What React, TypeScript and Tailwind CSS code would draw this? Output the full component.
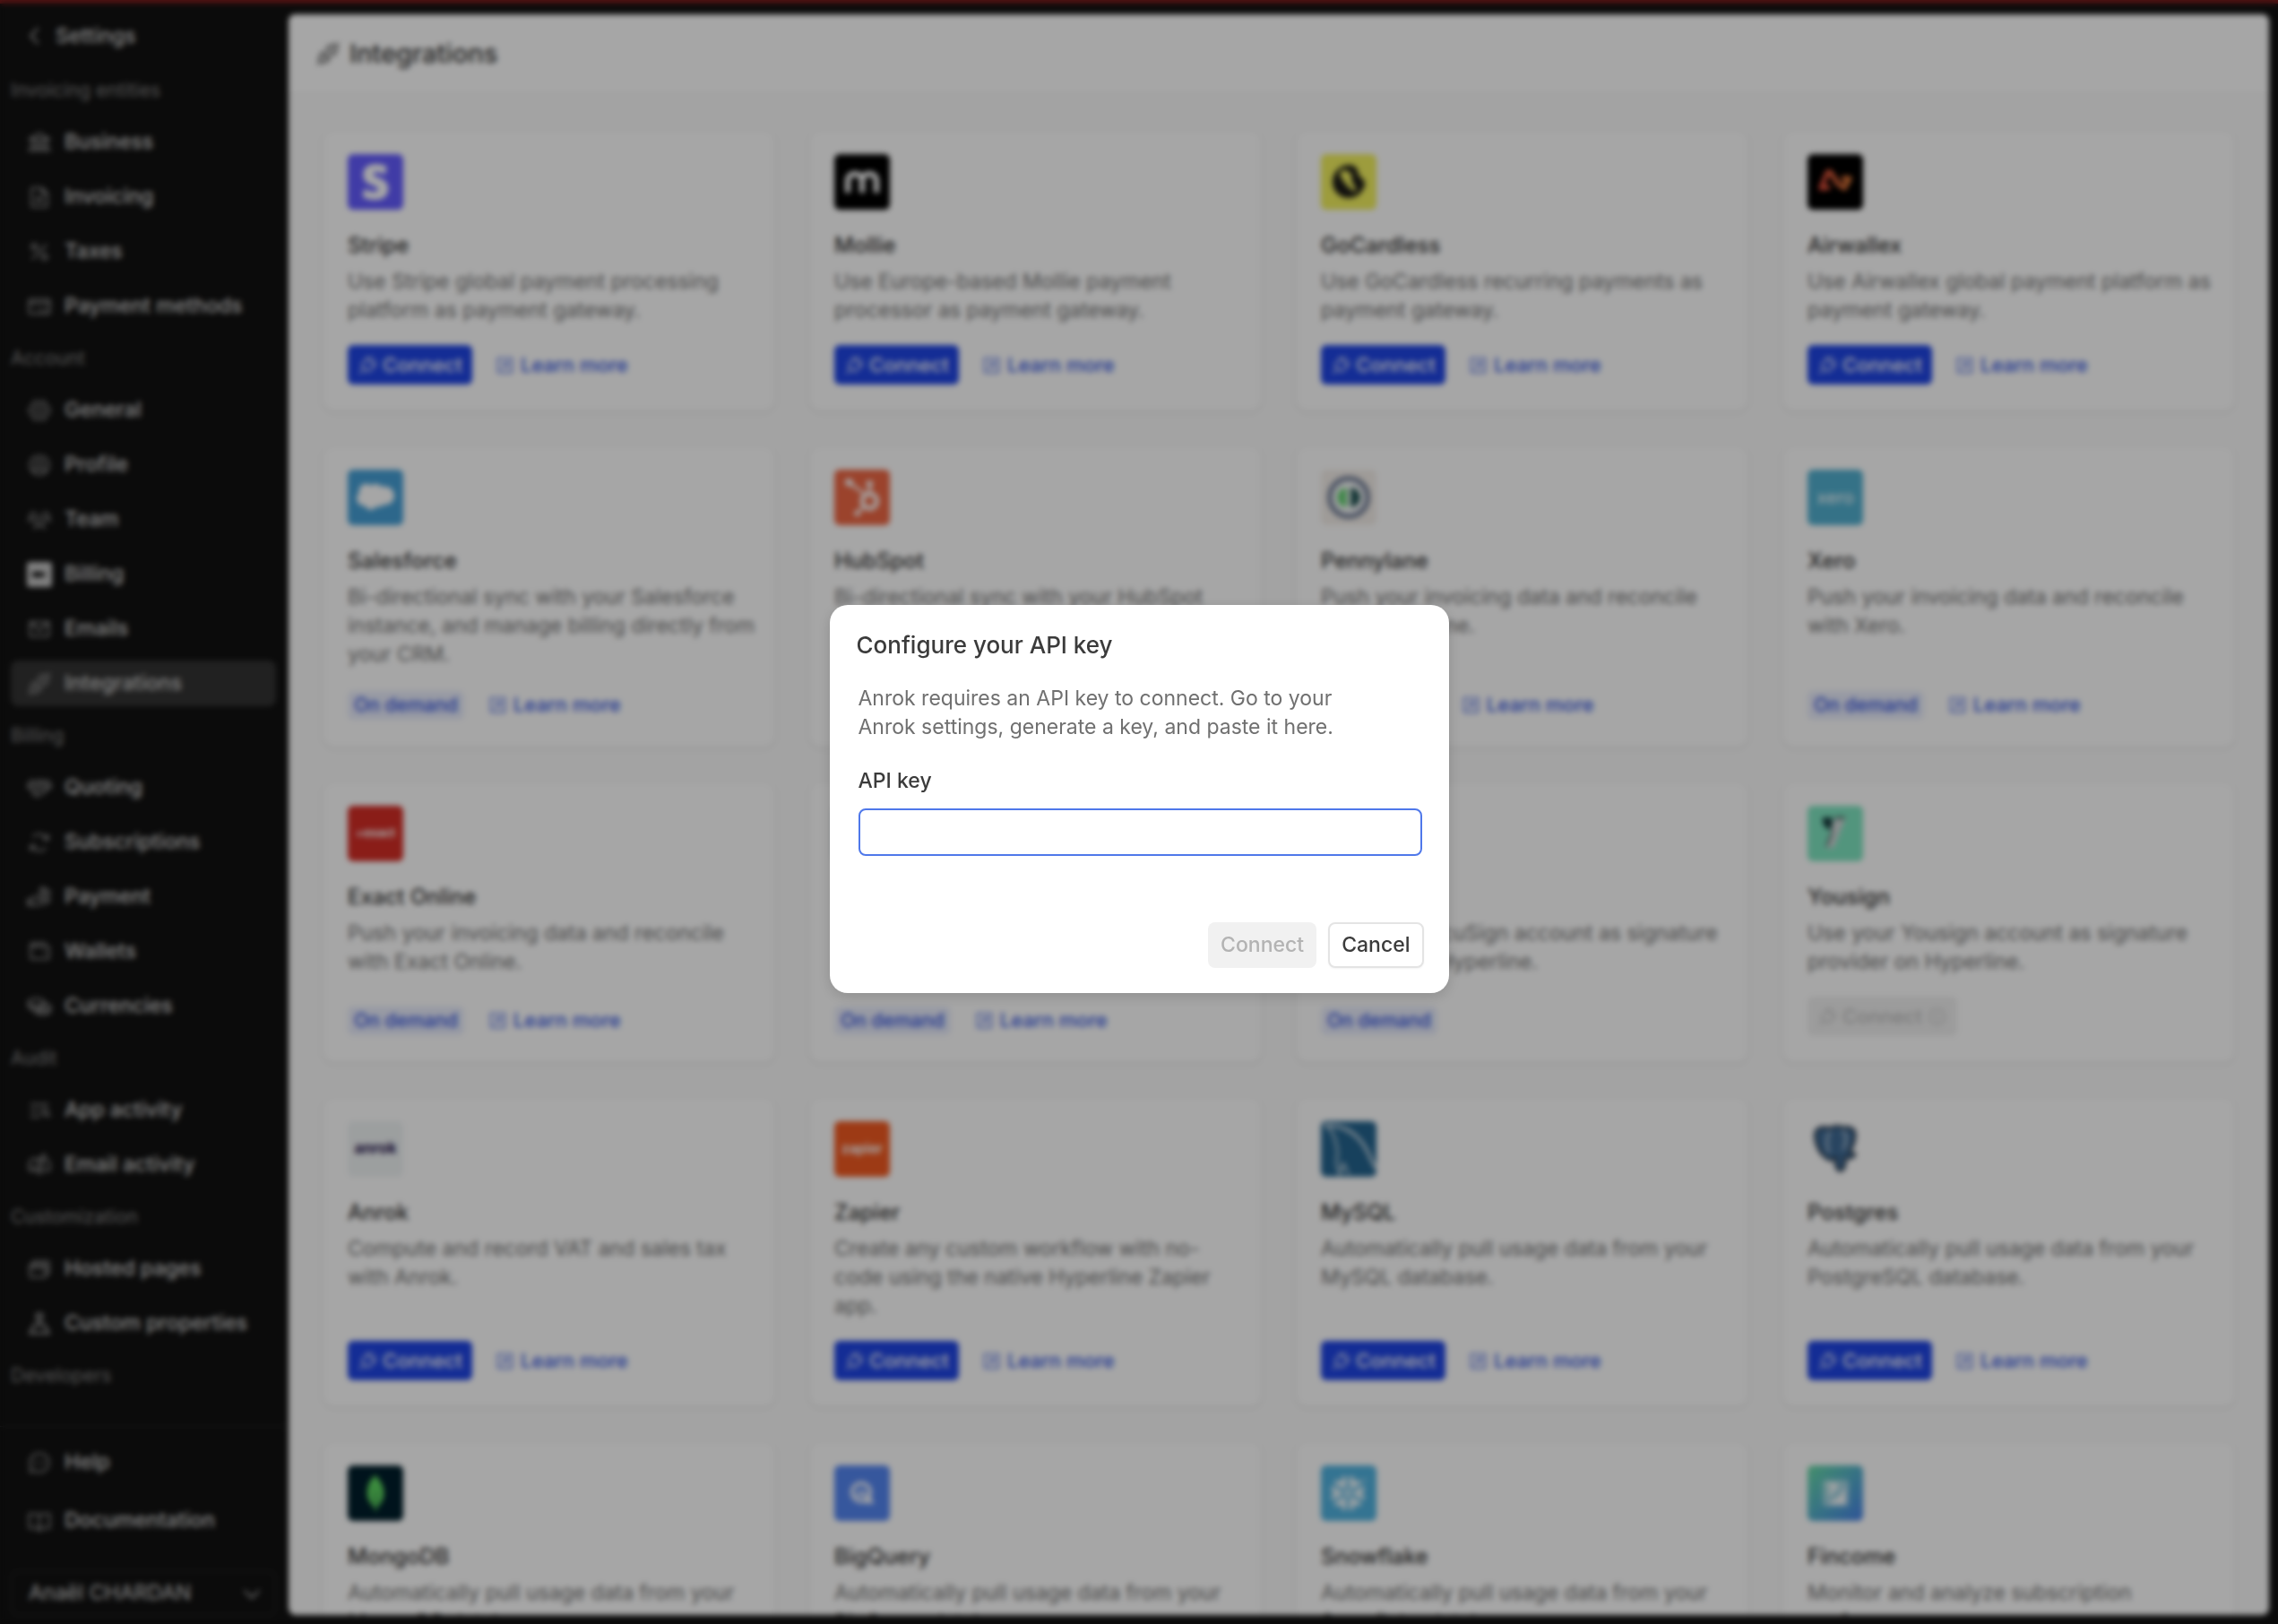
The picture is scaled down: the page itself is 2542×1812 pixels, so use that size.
import type { ComponentType, ReactNode } from "react";
import {
  PiArrowsClockwise,
  PiArrowSquareUpRight,
  PiBank,
  PiBookOpen,
  PiBrowsers,
  PiCaretDown,
  PiCaretLeft,
  PiChatCircleDots,
  PiCoins,
  PiCreditCard,
  PiEnvelopeSimple,
  PiFileText,
  PiGearSix,
  PiHandCoins,
  PiHandshake,
  PiInfo,
  PiListMagnifyingGlass,
  PiMailbox,
  PiPercent,
  PiPlug,
  PiPlugs,
  PiUserCircle,
  PiUsersThree,
  PiWallet,
} from "react-icons/pi";
import { SiMongodb, SiSnowflake, SiStripe } from "react-icons/si";
import { FaHubspot } from "react-icons/fa";

type Icon = ComponentType<{ className?: string }>;

function BillingIcon({ className }: { className?: string }) {
  return (
    <svg viewBox="0 0 28 28" className={className} aria-hidden="true">
      <rect x="0" y="0" width="28" height="28" rx="3" fill="#c4c4c4" />
      <path d="M6 11h11l5 3-5 3H6z" fill="#111" />
    </svg>
  );
}

function PropertiesIcon({ className }: { className?: string }) {
  return (
    <svg viewBox="0 0 24 24" className={className} fill="none" stroke="currentColor" strokeWidth="2" aria-hidden="true">
      <circle cx="12" cy="5" r="3" />
      <path d="M12 8v5M3 21l4-8h10l4 8z" />
    </svg>
  );
}

type NavGroup = { title: string; items: { label: string; icon: Icon; active?: boolean }[] };

const groups: NavGroup[] = [
  {
    title: "Invoicing entities",
    items: [
      { label: "Business", icon: PiBank },
      { label: "Invoicing", icon: PiFileText },
      { label: "Taxes", icon: PiPercent },
      { label: "Payment methods", icon: PiCreditCard },
    ],
  },
  {
    title: "Account",
    items: [
      { label: "General", icon: PiGearSix },
      { label: "Profile", icon: PiUserCircle },
      { label: "Team", icon: PiUsersThree },
      { label: "Billing", icon: BillingIcon },
      { label: "Emails", icon: PiEnvelopeSimple },
      { label: "Integrations", icon: PiPlugs, active: true },
    ],
  },
  {
    title: "Billing",
    items: [
      { label: "Quoting", icon: PiHandshake },
      { label: "Subscriptions", icon: PiArrowsClockwise },
      { label: "Payment", icon: PiHandCoins },
      { label: "Wallets", icon: PiWallet },
      { label: "Currencies", icon: PiCoins },
    ],
  },
  {
    title: "Audit",
    items: [
      { label: "App activity", icon: PiListMagnifyingGlass },
      { label: "Email activity", icon: PiMailbox },
    ],
  },
  {
    title: "Customization",
    items: [
      { label: "Hosted pages", icon: PiBrowsers },
      { label: "Custom properties", icon: PropertiesIcon },
    ],
  },
  { title: "Developers", items: [] },
];

function NavItem({ label, icon: ItemIcon, active }: { label: string; icon: Icon; active?: boolean }) {
  return (
    <a
      href="#"
      className={
        active
          ? "flex h-[51px] items-center gap-[14px] rounded-lg bg-[#333333] pl-[18px] text-[23px] font-medium text-[#d4d4d4]"
          : "flex h-[51px] items-center gap-[14px] rounded-lg pl-[18px] text-[23px] font-medium text-[#d4d4d4]"
      }
    >
      <ItemIcon className="size-7 shrink-0 text-[#a3a3a3]" />
      {label}
    </a>
  );
}

function Sidebar() {
  return (
    <aside className="flex w-[322px] shrink-0 flex-col overflow-hidden pr-[14px] pl-3">
      <button type="button" className="mt-3 flex h-12 shrink-0 items-center gap-[10px] pl-[14px] text-[23px] font-medium text-[#d4d4d4]">
        <PiCaretLeft className="size-[26px]" />
        Settings
      </button>
      <nav className="mt-1 min-h-0 flex-1 overflow-hidden">
        {groups.map((group) => (
          <section key={group.title}>
            <h2 className="my-4 text-[21px] leading-[33px] text-[#858585]">{group.title}</h2>
            <div className="flex flex-col gap-[10px]">
              {group.items.map((item) => (
                <NavItem key={item.label} {...item} />
              ))}
            </div>
          </section>
        ))}
      </nav>
      <div className="-mr-[14px] -ml-3 flex shrink-0 flex-col gap-[14px] border-t border-[#2a2a2a] pt-[14px] pr-[14px] pb-[9px] pl-3">
        <NavItem label="Help" icon={PiChatCircleDots} />
        <NavItem label="Documentation" icon={PiBookOpen} />
        <button
          type="button"
          className="mt-4 flex h-[51px] items-center justify-between rounded-lg border-2 border-[#222222] pr-3 pl-[18px] text-[23px] text-[#d4d4d4]"
        >
          Anaël CHARDAN
          <PiCaretDown className="size-[26px]" />
        </button>
      </div>
    </aside>
  );
}

function Tile({ className, children }: { className: string; children?: ReactNode }) {
  return (
    <div className={`flex size-[62px] shrink-0 items-center justify-center overflow-hidden rounded-md ${className}`}>
      {children}
    </div>
  );
}

const logos: Record<string, ReactNode> = {
  Stripe: (
    <Tile className="bg-[#635bff] text-white">
      <SiStripe className="size-10" />
    </Tile>
  ),
  Mollie: (
    <Tile className="bg-black">
      <svg viewBox="0 0 62 62" className="size-full" fill="none" stroke="#fff" strokeWidth="6">
        <path d="M15 43V30c0-5 3-8 8-8s8 3 8 8v13M31 30c0-5 3-8 8-8s8 3 8 8v13" />
      </svg>
    </Tile>
  ),
  GoCardless: (
    <Tile className="bg-[#f1f05e]">
      <svg viewBox="0 0 62 62" className="size-full">
        <path
          d="M31 12c6 0 9 2 10 7 1 3 1 5 5 8 4 4 4 8 1 12a18 18 0 0 1-16 10 18 18 0 0 1-18-18c0-10 8-19 18-19z"
          fill="#1c1b18"
        />
        <path d="M22 19c3-2 10-1 12 4 1 4-1 6 2 10 2 4 4 6 3 9-5-2-10-6-13-11-3-4-6-8-4-12z" fill="#f1f05e" />
      </svg>
    </Tile>
  ),
  Airwallex: (
    <Tile className="bg-black">
      <svg viewBox="0 0 62 62" className="size-full" fill="none" strokeWidth="5" strokeLinejoin="round">
        <defs>
          <linearGradient id="airwallex" x1="0" x2="1">
            <stop offset="0" stopColor="#f2503f" />
            <stop offset="1" stopColor="#f0843c" />
          </linearGradient>
        </defs>
        <path d="M25 37l-10 1 7-17c1-2 3-2 4 0l8 12 7 5 6-11h-9" stroke="url(#airwallex)" />
      </svg>
    </Tile>
  ),
  Salesforce: (
    <Tile className="bg-[#459fd6]">
      <svg viewBox="0 0 62 62" className="size-full" fill="#fff">
        <path d="M14 19c4-4 9-4 12-1 4-3 8-3 11 1 5-2 15 1 15 10 0 7-6 11-12 10-3 3-6 3-8 2-3 5-11 5-13-1-6 1-9-4-9-8 0-3 1-5 3-6-1-2 0-5 1-7z" />
      </svg>
    </Tile>
  ),
  HubSpot: (
    <Tile className="bg-[#ee6744] text-white">
      <FaHubspot className="size-[42px]" />
    </Tile>
  ),
  Pennylane: (
    <Tile className="bg-[#f4efea]">
      <svg viewBox="0 0 62 62" className="size-full">
        <circle cx="31" cy="31" r="21" fill="#fff" stroke="#75819a" strokeWidth="6" />
        <path d="M29 20a11 11 0 0 0 0 22z" fill="#65cf74" />
        <path d="M33 20a11 11 0 0 1 0 22z" fill="#235555" />
      </svg>
    </Tile>
  ),
  Xero: <Tile className="bg-[#52b0d0] text-[20px] text-white">xero</Tile>,
  "Exact Online": <Tile className="bg-[#d42d26] text-[13px] font-bold text-white">=exact</Tile>,
  NetSuite: <Tile className="bg-[#1b3a57] text-xl font-bold text-white">N</Tile>,
  DocuSign: <Tile className="bg-[#4c00ff] text-xl font-bold text-white">D</Tile>,
  Yousign: (
    <Tile className="bg-[#7fe5c1]">
      <svg viewBox="0 0 62 62" className="size-full">
        <path d="M17 13h11l-1 13h-5c-4-4-6-8-5-13z" fill="#15383b" />
        <path d="M31 12h12l-14 35h-9z" fill="#d5d8da" />
        <path d="M31 12h12l-3 3h-9zM20 45l8-20v6l-6 15z" fill="#40635f" />
      </svg>
    </Tile>
  ),
  Anrok: <Tile className="bg-[#f0f4f5] text-[17px] font-bold text-[#23124a]">anrok</Tile>,
  Zapier: <Tile className="bg-[#f25a21] text-[15px] font-bold text-white">zapier</Tile>,
  MySQL: (
    <Tile className="bg-[#24648f]">
      <svg viewBox="0 0 62 62" className="size-full" fill="none" stroke="#d8e3ea" strokeWidth="3">
        <path d="M5 5c7 3 11 13 13 25 2 9-2 14 0 20l3 9 4-12 6 12" strokeWidth="2" />
        <path d="M4 5c24-2 39 12 47 27 4 8 7 16 11 21" />
      </svg>
    </Tile>
  ),
  Postgres: (
    <Tile className="">
      <svg viewBox="0 0 62 62" className="size-full">
        <path
          d="M9 12c3-6 10-6 16-4 4-3 10-3 14-1 7-1 14 0 14 8 0 7-3 14-6 19l6 3c-2 4-7 5-11 4 0 6 0 12-4 14-5 1-7-4-7-14-5 4-9 2-11-1C12 35 7 20 9 12z"
          fill="#3f6b96"
          stroke="#2a3a4c"
          strokeWidth="3"
        />
        <path d="M25 11c-4 6-4 18-1 24M39 10c5 5 5 14 1 22" fill="none" stroke="#dfe6ee" strokeWidth="2" />
      </svg>
    </Tile>
  ),
  MongoDB: (
    <Tile className="bg-[#001e2b] text-[#5cd65f]">
      <SiMongodb className="size-[42px]" />
    </Tile>
  ),
  BigQuery: (
    <Tile className="bg-[#5486f2]">
      <svg viewBox="0 0 62 62" className="size-full" fill="none" stroke="#fff" strokeWidth="4">
        <circle cx="30" cy="30" r="10" />
        <path d="M26 31v4M30 27v8M34 30v5M34 41h8l-5-8" strokeWidth="3" />
      </svg>
    </Tile>
  ),
  Snowflake: (
    <Tile className="bg-[#50b2e0] text-white">
      <SiSnowflake className="size-10" />
    </Tile>
  ),
  Fincome: (
    <Tile className="bg-linear-to-br from-[#6bdba3] to-[#4a80e8]">
      <svg viewBox="0 0 62 62" className="size-full">
        <rect x="17" y="16" width="29" height="30" rx="4" fill="#fff" fillOpacity="0.45" />
        <path d="M25 40c10-2 15-8 17-19v22H25z" fill="#fff" />
        <path d="M22 22h12M24 32l8-8" stroke="#fff" strokeWidth="4" />
      </svg>
    </Tile>
  ),
};

type Action = "connect" | "demand" | "demand-only" | "disabled";

const integrations: { name: string; text: string; action: Action }[] = [
  { name: "Stripe", text: "Use Stripe global payment processing platform as payment gateway.", action: "connect" },
  { name: "Mollie", text: "Use Europe-based Mollie payment processor as payment gateway.", action: "connect" },
  { name: "GoCardless", text: "Use GoCardless recurring payments as payment gateway.", action: "connect" },
  { name: "Airwallex", text: "Use Airwallex global payment platform as payment gateway.", action: "connect" },
  {
    name: "Salesforce",
    text: "Bi-directional sync with your Salesforce instance, and manage billing directly from your CRM.",
    action: "demand",
  },
  {
    name: "HubSpot",
    text: "Bi-directional sync with your HubSpot instance, and manage billing directly from your CRM.",
    action: "demand",
  },
  { name: "Pennylane", text: "Push your invoicing data and reconcile with Pennylane.", action: "demand" },
  { name: "Xero", text: "Push your invoicing data and reconcile with Xero.", action: "demand" },
  { name: "Exact Online", text: "Push your invoicing data and reconcile with Exact Online.", action: "demand" },
  { name: "NetSuite", text: "Push your invoicing data and reconcile with NetSuite.", action: "demand" },
  { name: "DocuSign", text: "Use your DocuSign account as signature provider on Hyperline.", action: "demand-only" },
  { name: "Yousign", text: "Use your Yousign account as signature provider on Hyperline.", action: "disabled" },
  { name: "Anrok", text: "Compute and record VAT and sales tax with Anrok.", action: "connect" },
  {
    name: "Zapier",
    text: "Create any custom workflow with no-code using the native Hyperline Zapier app.",
    action: "connect",
  },
  { name: "MySQL", text: "Automatically pull usage data from your MySQL database.", action: "connect" },
  { name: "Postgres", text: "Automatically pull usage data from your PostgreSQL database.", action: "connect" },
  { name: "MongoDB", text: "Automatically pull usage data from your MongoDB database.", action: "connect" },
  { name: "BigQuery", text: "Automatically pull usage data from your BigQuery database.", action: "connect" },
  { name: "Snowflake", text: "Automatically pull usage data from your Snowflake database.", action: "connect" },
  { name: "Fincome", text: "Monitor and analyze subscription performance.", action: "connect" },
];

function LearnMore() {
  return (
    <a href="#" className="flex items-center gap-[6px] text-[22px] font-medium text-[#3355e0]">
      <PiArrowSquareUpRight className="size-[23px]" />
      Learn more
    </a>
  );
}

function CardActions({ action }: { action: Action }) {
  if (action === "connect") {
    return (
      <div className="mt-auto flex items-center gap-[25px]">
        <button type="button" className="flex h-11 items-center gap-[5px] rounded-md bg-[#1f45e5] px-[11px] text-[22px] font-medium text-white">
          <PiPlug className="size-[23px]" />
          Connect
        </button>
        <LearnMore />
      </div>
    );
  }
  if (action === "disabled") {
    return (
      <div className="mt-auto flex">
        <button type="button" disabled className="flex h-11 items-center gap-[5px] rounded-md bg-[#f0f0f0] px-[11px] text-[22px] font-medium text-[#bdbdbd]">
          <PiPlug className="size-[23px]" />
          Connect
          <PiInfo className="size-[23px]" />
        </button>
      </div>
    );
  }
  return (
    <div className="mt-auto flex h-[35px] items-center gap-[26px]">
      <span className="flex h-8 items-center rounded-md bg-[#e9edfc] px-[7px] text-[21px] font-medium text-[#2f50dd]">
        On demand
      </span>
      {action === "demand" && <LearnMore />}
    </div>
  );
}

function IntegrationCard({ name, text, action }: { name: string; text: string; action: Action }) {
  return (
    <article className="flex flex-col rounded-xl bg-white pt-[26px] pr-5 pb-[29px] pl-[27px] shadow-[0_1px_4px_rgba(0,0,0,0.10)]">
      {logos[name]}
      <h3 className="mt-6 text-[24px] leading-8 font-medium text-[#333333]">{name}</h3>
      <p className="mt-2 mb-[23px] text-[23px] leading-8 text-[#707070]">{text}</p>
      <CardActions action={action} />
    </article>
  );
}

function ApiKeyDialog() {
  return (
    <div className="fixed inset-0 flex items-center justify-center bg-black/35 pb-[29px] backdrop-blur-[3px]">
      <form
        role="dialog"
        aria-modal="true"
        aria-labelledby="dialog-title"
        onSubmit={(event) => event.preventDefault()}
        className="w-[691px] rounded-[20px] bg-white pt-7 pr-7 pb-7 pl-[30px] shadow-[0_4px_16px_rgba(0,0,0,0.15)]"
      >
        <h2 id="dialog-title" className="text-[26px] leading-[34px] font-medium text-[#3b3b3b]">
          Configure your API key
        </h2>
        <div className="px-[2px]">
          <p className="mt-[26px] max-w-[560px] text-[23px] leading-8 text-[#707070]">
            Anrok requires an API key to connect. Go to your Anrok settings, generate a key, and paste it here.
          </p>
          <label htmlFor="api-key" className="mt-7 block text-[23px] leading-8 font-medium text-[#3b3b3b]">
            API key
          </label>
          <input
            id="api-key"
            type="text"
            className="mt-[15px] block h-[53px] w-full rounded-lg border-2 border-[#4f78ea] px-3 text-[23px] outline-none"
          />
        </div>
        <div className="mt-[74px] flex justify-end gap-[13px]">
          <button type="submit" disabled className="h-[51px] rounded-lg bg-[#f1f1f1] px-[14px] text-[23px] font-medium text-[#b3b3b3]">
            Connect
          </button>
          <button
            type="button"
            className="h-[51px] rounded-lg border-2 border-[#e4e4e4] bg-white px-[13px] text-[23px] font-medium text-[#3b3b3b] shadow-xs"
          >
            Cancel
          </button>
        </div>
      </form>
    </div>
  );
}

export default function App() {
  return (
    <div className="flex h-screen flex-col overflow-hidden bg-[#111111] font-['Inter',sans-serif]">
      <div className="h-1 shrink-0 bg-[#7d1d1d]" />
      <div className="flex min-h-0 flex-1">
        <Sidebar />
        <main className="mt-3 mr-[10px] mb-[10px] flex min-w-0 flex-1 flex-col overflow-hidden rounded-lg bg-[#fafafa]">
          <header className="flex h-[89px] shrink-0 items-center gap-[10px] border-b border-[#f0f0f0] bg-white pl-[30px]">
            <PiPlugs className="size-7 text-[#333333]" />
            <h1 className="text-[29px] font-medium text-[#333333]">Integrations</h1>
          </header>
          <div className="grid grid-cols-4 gap-10 overflow-hidden px-[39px] pt-[41px]">
            {integrations.map((item) => (
              <IntegrationCard key={item.name} {...item} />
            ))}
          </div>
        </main>
      </div>
      <ApiKeyDialog />
    </div>
  );
}
